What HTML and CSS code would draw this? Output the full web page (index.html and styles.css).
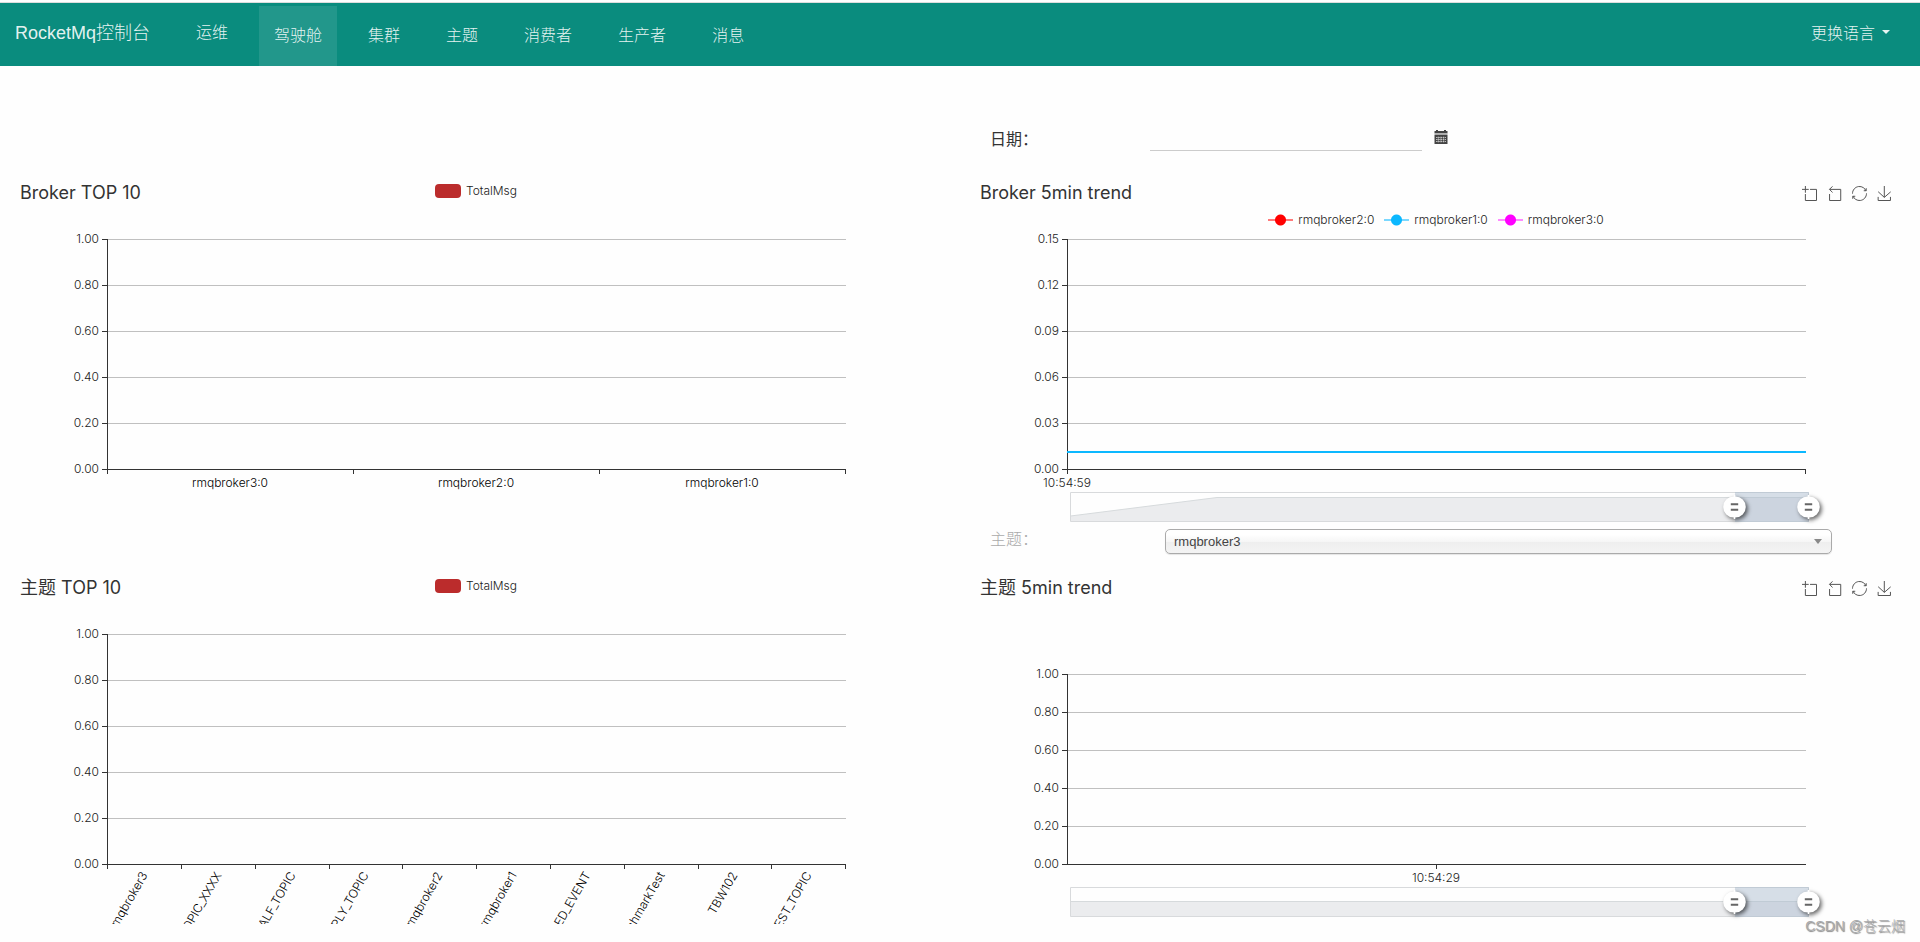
FILE: index.html
```html
<!DOCTYPE html>
<html lang="zh-CN">
<head>
<meta charset="utf-8">
<title>RocketMq控制台</title>
<link rel="stylesheet" href="styles.css">
</head>
<body>
<svg class="defs" aria-hidden="true">
  <defs>
    <symbol id="i-zoom" viewBox="0 0 60 60"><path d="M0,13.5h26.9 M13.5,26.9V0 M32.1,13.5H58V58H13.5 V32.1"/></symbol>
    <symbol id="i-back" viewBox="0 0 60 60"><path d="M22,1.4L9.9,13.5l12.3,12.3 M10.3,13.5H54.9v44.6 H10.3v-26"/></symbol>
    <symbol id="i-restore" viewBox="0 0 60 60"><path d="M47,18.9h9.8V8.7 M56.3,20.1 C52.1,9,40.5,0.6,26.8,2.1C12.6,3.7,1.6,16.2,2.1,30.6 M13,41.1H3.1v10.2 M3.7,39.9c4.2,11.1,15.8,19.5,29.5,18 c14.2-1.6,25.2-14.1,24.7-28.5"/></symbol>
    <symbol id="i-save" viewBox="0 0 60 60"><path d="M4.7,22.9L29.3,45.5L54.7,23.4M4.6,43.6L4.6,58L53.8,58L53.8,43.6M29.2,45.1L29.2,0"/></symbol>
    <g id="handle">
      <path class="knob" d="M0.8,-10.5V-12H-0.8V-10.5A10.5,10.5 0 0 0 -0.8,10.5V12H0.8V10.5A10.5,10.5 0 0 0 0.8,-10.5z"/>
      <path class="grip" d="M-3.7,-2.7H3.7M-3.7,2.7H3.7"/>
    </g>
  </defs>
</svg>

<header class="navbar">
  <a class="brand" href="#">RocketMq控制台</a>
  <nav class="menu">
    <a class="item raised" href="#">运维</a>
    <a class="item active" href="#">驾驶舱</a>
    <a class="item" href="#">集群</a>
    <a class="item" href="#">主题</a>
    <a class="item" href="#">消费者</a>
    <a class="item" href="#">生产者</a>
    <a class="item" href="#">消息</a>
  </nav>
  <button class="language" type="button">更换语言<span class="caret"></span></button>
</header>

<main class="dashboard">
  <div class="date-row">
    <label for="date">日期：</label>
    <input id="date" type="text">
    <svg class="calendar" viewBox="0 0 14 14" aria-hidden="true">
      <path fill="#444" d="M0.5,1H2V0H4V1H10V0H12V1H13.5V3.2H0.5z"/>
      <path fill="#aaa" d="M0.5,3.2H13.5V5H0.5z"/>
      <path fill="#444" d="M0.5,5H13.5V14H0.5z"/>
      <path stroke="#bbb" stroke-width="1" fill="none" d="M2,7.5H12M2,9.5H12M2,11.5H12" stroke-dasharray="1.6 0.6"/>
      <path stroke="#ccc" stroke-width="0.6" fill="none" d="M4.3,6.5V12.5M7,6.5V12.5M9.7,6.5V12.5"/>
    </svg>
  </div>

  <section class="chart left">
    <div class="head">
      <h2>Broker TOP 10</h2>
      <div class="legend"><span class="entry"><i class="swatch"></i>TotalMsg</span></div>
    </div>
    <svg class="plot" viewBox="0 52 922 298">
      <path class="grid" d="M93,60.5H831M93,106.5H831M93,152.5H831M93,198.5H831M93,244.5H831"/>
      <path class="axis" d="M92.5,60V295M87,290.5H831M87,60.5H92M87,106.5H92M87,152.5H92M87,198.5H92M87,244.5H92M338.5,290V295M584.5,290V295M830.5,290V295"/>
      <g class="ylab"><text x="84" y="64">1.00</text><text x="84" y="110">0.80</text><text x="84" y="156">0.60</text><text x="84" y="202">0.40</text><text x="84" y="248">0.20</text><text x="84" y="294">0.00</text></g>
      <g class="xlab dark"><text x="215" y="308">rmqbroker3:0</text><text x="461" y="308">rmqbroker2:0</text><text x="707" y="308">rmqbroker1:0</text></g>
    </svg>
  </section>

  <section class="chart right">
    <div class="head">
      <h2>Broker 5min trend</h2>
      <div class="tools">
        <button type="button" aria-label="区域缩放"><svg><use href="#i-zoom"/></svg></button>
        <button type="button" aria-label="缩放还原"><svg><use href="#i-back"/></svg></button>
        <button type="button" aria-label="还原"><svg><use href="#i-restore"/></svg></button>
        <button type="button" aria-label="保存为图片"><svg><use href="#i-save"/></svg></button>
      </div>
      <div class="legend below">
        <span class="entry red"><i class="marker"></i>rmqbroker2:0</span>
        <span class="entry blue"><i class="marker"></i>rmqbroker1:0</span>
        <span class="entry pink"><i class="marker"></i>rmqbroker3:0</span>
      </div>
    </div>
    <svg class="plot" viewBox="0 52 922 298">
      <path class="grid" d="M93,60.5H831M93,106.5H831M93,152.5H831M93,198.5H831M93,244.5H831"/>
      <path class="axis" d="M92.5,60V295M87,290.5H831M87,60.5H92M87,106.5H92M87,152.5H92M87,198.5H92M87,244.5H92M830.5,290V295"/>
      <path class="series" d="M92,273H831"/>
      <g class="ylab"><text x="84" y="64">0.15</text><text x="84" y="110">0.12</text><text x="84" y="156">0.09</text><text x="84" y="202">0.06</text><text x="84" y="248">0.03</text><text x="84" y="294">0.00</text></g>
      <g class="xlab"><text x="92" y="308">10:54:59</text></g>
      <path class="shadow-area" d="M95.5,337L242,318.5H833.5V342.5H95.5z"/>
      <path class="shadow-line" d="M95.5,337L242,318.5H833.5"/>
      <path class="slider" d="M95.5,313.5H833.5V342.5H95.5z"/>
      <path class="window" d="M760,313H834V343H760z"/>
      <use href="#handle" x="759.5" y="328"/><use href="#handle" x="833.5" y="328"/>
    </svg>
  </section>

  <div class="topic-row">
    <label for="topic">主题：</label>
    <div class="picker"><select id="topic"><option>rmqbroker3</option></select></div>
  </div>

  <section class="chart left">
    <div class="head">
      <h2>主题 TOP 10</h2>
      <div class="legend"><span class="entry"><i class="swatch"></i>TotalMsg</span></div>
    </div>
    <svg class="plot" viewBox="0 52 922 298">
      <path class="grid" d="M93,60.5H831M93,106.5H831M93,152.5H831M93,198.5H831M93,244.5H831"/>
      <path class="axis" d="M92.5,60V295M87,290.5H831M87,60.5H92M87,106.5H92M87,152.5H92M87,198.5H92M87,244.5H92M166.5,290V295M240.5,290V295M314.5,290V295M387.5,290V295M461.5,290V295M535.5,290V295M609.5,290V295M683.5,290V295M756.5,290V295M830.5,290V295"/>
      <g class="ylab"><text x="84" y="64">1.00</text><text x="84" y="110">0.80</text><text x="84" y="156">0.60</text><text x="84" y="202">0.40</text><text x="84" y="248">0.20</text><text x="84" y="294">0.00</text></g>
      <g class="tilted">
        <text transform="translate(133 301) rotate(-60)">rmqbroker3</text>
        <text transform="translate(207 301) rotate(-60)">OPIC_XXXX</text>
        <text transform="translate(281 301) rotate(-60)">ALF_TOPIC</text>
        <text transform="translate(354 301) rotate(-60)">PLY_TOPIC</text>
        <text transform="translate(428 301) rotate(-60)">rmqbroker2</text>
        <text transform="translate(502 301) rotate(-60)">rmqbroker1</text>
        <text transform="translate(576 301) rotate(-60)">ED_EVENT</text>
        <text transform="translate(650 301) rotate(-60)">chmarkTest</text>
        <text transform="translate(723 301) rotate(-60)">TBW102</text>
        <text transform="translate(797 301) rotate(-60)">EST_TOPIC</text>
      </g>
    </svg>
  </section>

  <section class="chart right">
    <div class="head">
      <h2>主题 5min trend</h2>
      <div class="tools">
        <button type="button" aria-label="区域缩放"><svg><use href="#i-zoom"/></svg></button>
        <button type="button" aria-label="缩放还原"><svg><use href="#i-back"/></svg></button>
        <button type="button" aria-label="还原"><svg><use href="#i-restore"/></svg></button>
        <button type="button" aria-label="保存为图片"><svg><use href="#i-save"/></svg></button>
      </div>
    </div>
    <svg class="plot" viewBox="0 52 922 298">
      <path class="grid" d="M93,100.5H831M93,138.5H831M93,176.5H831M93,214.5H831M93,252.5H831"/>
      <path class="axis" d="M92.5,100V291M87,290.5H831M87,100.5H92M87,138.5H92M87,176.5H92M87,214.5H92M87,252.5H92M461.5,290V295"/>
      <g class="ylab"><text x="84" y="104">1.00</text><text x="84" y="142">0.80</text><text x="84" y="180">0.60</text><text x="84" y="218">0.40</text><text x="84" y="256">0.20</text><text x="84" y="294">0.00</text></g>
      <g class="xlab"><text x="461" y="308">10:54:29</text></g>
      <path class="shadow-area" d="M95.5,327.5H833.5V342.5H95.5z"/>
      <path class="shadow-line" d="M95.5,327.5H833.5"/>
      <path class="slider" d="M95.5,313.5H833.5V342.5H95.5z"/>
      <path class="window" d="M760,313H834V343H760z"/>
      <use href="#handle" x="759.5" y="328"/><use href="#handle" x="833.5" y="328"/>
    </svg>
  </section>
</main>
<div class="credit">CSDN @苍云烟</div>
</body>
</html>
```
FILE: styles.css
```css
* { box-sizing: border-box; }
body {
  margin: 0;
  position: relative;
  min-height: 100vh;
  background: #fefefe;
  color: #333;
  font-family: "Liberation Sans", "Noto Sans CJK SC", sans-serif;
  font-size: 16px;
}
.defs { position: absolute; width: 0; height: 0; }

.navbar {
  display: flex;
  align-items: stretch;
  height: 64px;
  margin-top: 2px;
  padding-right: 30px;
  border-top: 1px solid #ddd;
  background: #0a8c7e;
  font-weight: 300;
}
.navbar a, .language { color: rgba(255, 255, 255, .9); text-decoration: none; }
.brand { padding: 0 15px; margin-right: 16px; font-size: 18px; line-height: 60px; white-space: nowrap; }
.menu { display: flex; flex: 1; gap: 16px; padding-top: 3px; }
.item { padding: 0 15px; line-height: 60px; white-space: nowrap; }
.item.raised { line-height: 54px; }
.item.active { background: rgba(255, 255, 255, .1); }
.language {
  display: flex;
  align-items: center;
  gap: 7px;
  border: 0;
  padding: 0 0 6px;
  background: none;
  font: inherit;
}
.caret { border: 4px solid transparent; border-top-color: currentColor; border-bottom: 0; }

.dashboard { display: grid; grid-template-columns: 1fr 1fr; }
.left { grid-column: 1; }
.right { grid-column: 2; }
.date-row, .topic-row { grid-column: 2; display: flex; align-items: flex-start; padding-left: 30px; }
.date-row { padding-top: 57px; height: 113px; }
.topic-row { height: 45px; padding-right: 88px; }
.date-row label { width: 160px; line-height: 34px; }
.date-row input {
  flex: 0 1 272px;
  height: 28px;
  border: 0;
  border-bottom: 1px solid #ccc;
  background: transparent;
}
.calendar { width: 14px; height: 14px; margin: 7px 0 0 12px; }
.topic-row label { width: 175px; line-height: 22px; color: #aaa; font-weight: 300; }
.picker { position: relative; flex: 1; }
.picker::after {
  content: "";
  position: absolute;
  top: 10px;
  right: 10px;
  border: 4px solid transparent;
  border-top: 5px solid #888;
  border-bottom: 0;
}
.picker select {
  display: block;
  width: 100%;
  height: 25px;
  padding: 0 8px;
  appearance: none;
  border: 1px solid #aaa;
  border-radius: 5px;
  background: linear-gradient(#fff 20%, #f6f6f6 50%, #eee 52%, #f4f4f4 100%);
  box-shadow: 0 1px 1px rgba(0, 0, 0, .1);
  color: #444;
  font: 13px "Liberation Sans", sans-serif;
}

.chart { padding: 0 23px 0 15px; font-family: Inter, "Noto Sans CJK SC", sans-serif; }
.head {
  display: grid;
  grid-template-columns: 1fr auto 1fr;
  grid-template-rows: 30px 22px;
  padding: 0 5px;
}
.head h2 { margin: 0; font-size: 18px; font-weight: 400; line-height: 28px; }
.legend { display: flex; gap: 10px; font-size: 12px; font-weight: 300; line-height: 24px; grid-column: 2; align-self: start; color: #222; }
.legend.below { grid-column: 1 / 4; grid-row: 2; justify-content: center; line-height: 22px; }
.entry { display: flex; align-items: center; gap: 5px; }
.swatch { width: 26px; height: 14px; border-radius: 4px; background: #bb2c2c; }
.marker {
  width: 25px;
  height: 12px;
  background:
    radial-gradient(circle, var(--c) 5px, transparent 6px),
    linear-gradient(var(--l), var(--l)) center / 100% 2px no-repeat;
}
.red { --c: #f00; --l: #ff7a7a; }
.blue { --c: #0cb8ff; --l: #7ad8ff; }
.pink { --c: #f0f; --l: #ff8aff; }
.tools { display: flex; gap: 10px; grid-column: 3; justify-content: flex-end; padding-top: 7px; }
.tools button { width: 15px; height: 15px; padding: 0; border: 0; background: none; }
.tools svg { display: block; width: 15px; height: 15px; overflow: visible; fill: none; stroke: #555; stroke-width: 4; }

.plot { display: block; width: 100%; height: auto; font-size: 12px; font-weight: 300; }
.plot path { fill: none; }
.plot .grid { stroke: #c0c0c0; }
.plot .axis { stroke: #333; }
.plot .series { stroke: #0cb8ff; stroke-width: 2; }
.ylab { fill: #222; text-anchor: end; }
.xlab { fill: #222; text-anchor: middle; }
.xlab.dark, .tilted { fill: #000; }
.tilted { text-anchor: end; }
.plot .shadow-area { fill: #ebecee; }
.plot .shadow-line { stroke: #d6dadc; }
.plot .slider { stroke: #d8dadc; }
.plot .window { fill: rgba(167, 183, 204, .45); }
.defs .knob { fill: #fff; filter: drop-shadow(2px 2px 2px rgba(0, 0, 0, .6)); }
.defs .grip { fill: none; stroke: #666; stroke-width: 2; }

.credit {
  position: absolute;
  right: 15px;
  bottom: 5px;
  color: #aaa;
  font-size: 14px;
  font-weight: 300;
  line-height: 22px;
  text-shadow: 1px 1px 1px #888;
}
```
